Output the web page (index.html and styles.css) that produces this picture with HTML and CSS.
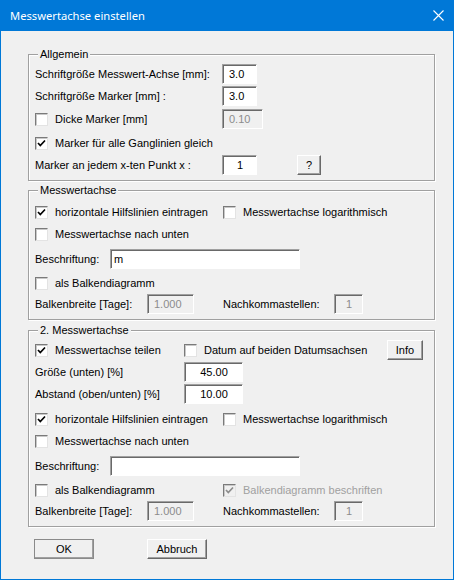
FILE: index.html
```html
<!DOCTYPE html>
<html lang="de">
<head>
<meta charset="utf-8">
<title>Messwertachse einstellen</title>
<link rel="stylesheet" href="styles.css">
</head>
<body>
<div class="window">
  <div class="titlebar">
    <span class="title">Messwertachse einstellen</span>
    <svg class="close" width="11" height="11" viewBox="0 0 11 11"><path d="M0.5 0.5 L10.5 10.5 M10.5 0.5 L0.5 10.5" stroke="#fff" stroke-width="1.1" fill="none"/></svg>
  </div>
  <div class="content">
    <fieldset class="group g1">
      <legend>Allgemein</legend>
      <div class="row"><span class="lbl w187">Schriftgröße Messwert-Achse [mm]:</span><span class="field w35">3.0</span></div>
      <div class="row mt2"><span class="lbl w187">Schriftgröße Marker [mm] :</span><span class="field w35">3.0</span></div>
      <div class="row mt3"><span class="chk w187"><span class="box"></span>Dicke Marker [mm]</span><span class="field dis w41">0.10</span></div>
      <div class="row mt4"><span class="chk"><span class="box"><svg viewBox="0 0 11 11"><path d="M2 5 L4.3 7.5 L9 2.5" stroke="#000" stroke-width="1.7" fill="none"/></svg></span>Marker für alle Ganglinien gleich</span></div>
      <div class="row mt2"><span class="lbl w187">Marker an jedem x-ten Punkt x :</span><span class="field w35 ctr">1</span><span class="btn qbtn">?</span></div>
    </fieldset>

    <fieldset class="group g2">
      <legend>Messwertachse</legend>
      <div class="row"><span class="chk w188"><span class="box"><svg viewBox="0 0 11 11"><path d="M2 5 L4.3 7.5 L9 2.5" stroke="#000" stroke-width="1.7" fill="none"/></svg></span>horizontale Hilfslinien eintragen</span><span class="chk"><span class="box"></span>Messwertachse logarithmisch</span></div>
      <div class="row mt2"><span class="chk"><span class="box"></span>Messwertachse nach unten</span></div>
      <div class="row mt5"><span class="lbl w75">Beschriftung:</span><span class="field w190 pl2">m</span></div>
      <div class="row mt4"><span class="chk"><span class="box"></span>als Balkendiagramm</span></div>
      <div class="row mt1"><span class="lbl w112">Balkenbreite [Tage]:</span><span class="field dis w47">1.000</span><span class="lbl gap29"></span><span class="lbl w111">Nachkommastellen:</span><span class="field dis w29 ctr">1</span></div>
    </fieldset>

    <fieldset class="group g3">
      <legend>2. Messwertachse</legend>
      <div class="row"><span class="chk w149"><span class="box"><svg viewBox="0 0 11 11"><path d="M2 5 L4.3 7.5 L9 2.5" stroke="#000" stroke-width="1.7" fill="none"/></svg></span>Messwertachse teilen</span><span class="chk wide"><span class="box"></span>Datum auf beiden Datumsachsen</span><span class="btn infobtn">Info</span></div>
      <div class="row mt2"><span class="lbl w149">Größe (unten) [%]</span><span class="field w59 ctr">45.00</span></div>
      <div class="row mt2"><span class="lbl w149">Abstand (oben/unten) [%]</span><span class="field w59 ctr">10.00</span></div>
      <div class="row mt5"><span class="chk w188"><span class="box"><svg viewBox="0 0 11 11"><path d="M2 5 L4.3 7.5 L9 2.5" stroke="#000" stroke-width="1.7" fill="none"/></svg></span>horizontale Hilfslinien eintragen</span><span class="chk"><span class="box"></span>Messwertachse logarithmisch</span></div>
      <div class="row mt2"><span class="chk"><span class="box"></span>Messwertachse nach unten</span></div>
      <div class="row mt5"><span class="lbl w75">Beschriftung:</span><span class="field w190 pl2"></span></div>
      <div class="row mt4"><span class="chk w188"><span class="box"></span>als Balkendiagramm</span><span class="chk dimmed"><span class="box dis"><svg viewBox="0 0 11 11"><path d="M2 5 L4.3 7.5 L9 2.5" stroke="#8c8c8c" stroke-width="1.7" fill="none"/></svg></span>Balkendiagramm beschriften</span></div>
      <div class="row mt1"><span class="lbl w112">Balkenbreite [Tage]:</span><span class="field dis w47">1.000</span><span class="lbl gap29"></span><span class="lbl w111">Nachkommastellen:</span><span class="field dis w29 ctr">1</span></div>
    </fieldset>

    <div class="buttons">
      <span class="btn okbtn">OK</span>
      <span class="btn cancelbtn">Abbruch</span>
    </div>
  </div>
</div>
</body>
</html>
```

FILE: styles.css
```css
html, body {
  margin: 0;
  padding: 0;
  background: #f0f0f0;
}

body {
  font-family: "Liberation Sans", Arial, sans-serif;
  font-size: 11px;
  color: #000;
}

.window {
  width: 454px;
  height: 580px;
  box-sizing: border-box;
  border: 1px solid #0078d7;
  border-top: 0;
  background: #f0f0f0;
  display: flex;
  flex-direction: column;
}

.titlebar {
  height: 31px;
  flex: none;
  background: #0078d7;
  color: #fff;
  display: flex;
  align-items: center;
  justify-content: space-between;
  padding: 0 9px 0 9px;
  font-family: "Noto Sans", "Open Sans", sans-serif;
  font-size: 11.2px;
}

.title {
  padding-bottom: 1px;
}

.close {
  display: block;
  margin-top: -1px;
}

.content {
  padding: 0 0 0 27px;
}

.group {
  width: 407px;
  box-sizing: border-box;
  min-width: 0;
  margin: 0;
  border: 1px solid #a0a0a0;
  box-shadow: 1px 1px 0 #fff, inset 1px 1px 0 #fff;
  padding: 3px 0 5px 6px;
}

.group legend {
  margin-left: 3px;
  padding: 0 2px;
  line-height: 14px;
  background: #f0f0f0;
}

.g1 { margin-top: 16px; }
.g2 { margin-top: 2px; padding-top: 5px; padding-bottom: 5px; }
.g3 { margin-top: 3px; padding-top: 3px; padding-bottom: 5px; }

.row {
  display: flex;
  align-items: center;
  height: 20px;
}

.mt1 { margin-top: 1px; }
.mt2 { margin-top: 2px; }
.mt3 { margin-top: 3px; }
.mt4 { margin-top: 4px; }
.mt5 { margin-top: 5px; }

.lbl, .chk {
  flex: none;
  white-space: nowrap;
}

.chk {
  display: flex;
  align-items: center;
}

.w75 { width: 75px; }
.w111 { width: 111px; }
.w112 { width: 112px; }
.w149 { width: 149px; }
.w187 { width: 187px; }
.w188 { width: 188px; }
.gap29 { width: 29px; }
.wide { width: 203px; }

.box {
  width: 13px;
  height: 13px;
  box-sizing: border-box;
  flex: none;
  margin-right: 7px;
  background: #fff;
  border: 1px solid;
  border-color: #7a7a7a #e3e3e3 #e3e3e3 #7a7a7a;
  box-shadow: inset 1px 1px 0 #c8c8c8;
  display: flex;
  align-items: center;
  justify-content: center;
}

.box svg {
  width: 11px;
  height: 11px;
  display: block;
}

.box.dis {
  background: #f0f0f0;
}

.dimmed {
  color: #a0a0a0;
}

.field {
  flex: none;
  box-sizing: border-box;
  height: 20px;
  background: #fff;
  border: 1px solid;
  border-color: #a0a0a0 #fff #fff #a0a0a0;
  box-shadow: inset 1px 1px 0 #696969;
  display: flex;
  align-items: center;
  padding-left: 6px;
  white-space: nowrap;
}

.field.dis {
  background: #f0f0f0;
  color: #8c8c8c;
}

.field.ctr {
  justify-content: center;
  padding-left: 1px;
}

.field.pl2 { padding-left: 3px; }

.w29 { width: 29px; }
.w35 { width: 35px; }
.w41 { width: 41px; }
.w47 { width: 47px; }
.w59 { width: 59px; }
.w190 { width: 190px; }

.btn {
  flex: none;
  box-sizing: border-box;
  height: 20px;
  background: #f0f0f0;
  border: 1px solid;
  border-color: #fff #696969 #696969 #fff;
  box-shadow: inset -1px -1px 0 #a0a0a0;
  display: flex;
  align-items: center;
  justify-content: center;
  padding-bottom: 1px;
}

.qbtn {
  width: 24px;
  margin-left: 40px;
}

.infobtn {
  width: 36px;
}

.buttons {
  display: flex;
  margin-top: 12px;
  padding-left: 6px;
}

.okbtn {
  width: 60px;
  border-color: #fff #3c3c3c #3c3c3c #fff;
  outline: 1px solid #8a8a8a;
  outline-offset: -1px;
}

.cancelbtn {
  width: 60px;
  margin-left: 53px;
}
```
